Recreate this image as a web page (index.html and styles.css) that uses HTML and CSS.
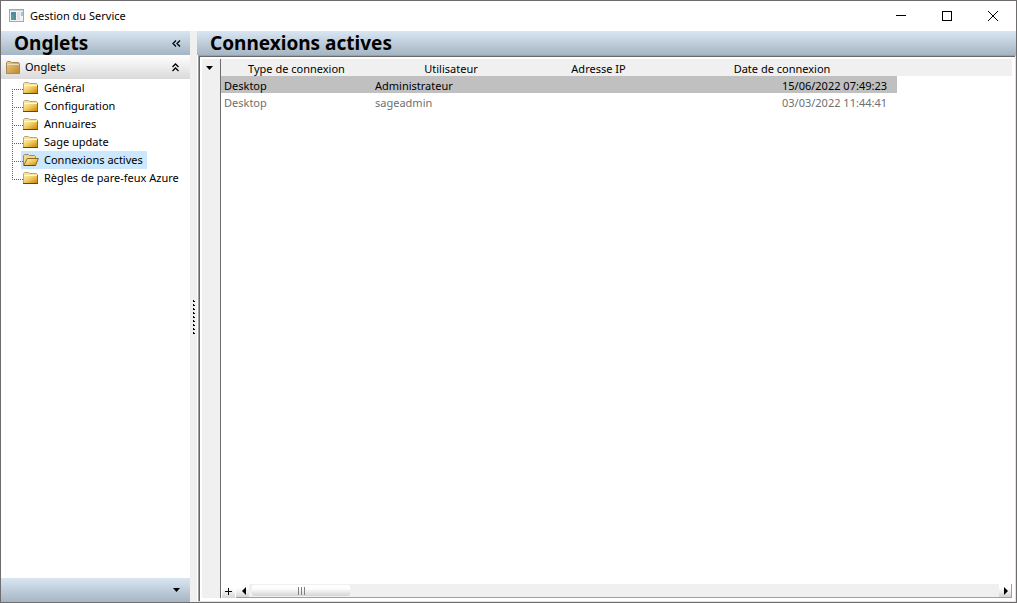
FILE: index.html
```html
<!DOCTYPE html>
<html lang="fr">

<head>
  <meta charset="UTF-8">
  <meta name="viewport" content="width=device-width, initial-scale=1.0">
  <title>Gestion du Service</title>
  <link rel="stylesheet" href="styles.css">
</head>

<body>
  <!-- Shared icons -->
  <svg class="icon-defs" width="0" height="0" aria-hidden="true">
    <defs>
      <linearGradient id="gold" x1="0" y1="0" x2="1" y2="1">
        <stop offset="0" stop-color="#fff3bd" />
        <stop offset="0.5" stop-color="#f0c95e" />
        <stop offset="1" stop-color="#c98500" />
      </linearGradient>
      <linearGradient id="brown" x1="0" y1="0" x2="1" y2="1">
        <stop offset="0" stop-color="#ecce86" />
        <stop offset="1" stop-color="#bd8630" />
      </linearGradient>
      <symbol id="folder" viewBox="0 0 16 12">
        <path d="M.5 11V1.500L1.500.5H5.500L6.500 1.500H13.500L14.500 2.500V11.500H.5Z" fill="#f6e3a0" stroke="#b5a67c" />
        <path d="M1 3H14V11H1Z" fill="url(#gold)" />
        <path d="M1 3.500H14" stroke="#fff8d8" />
        <path d="M0 11.500H15" stroke="#5e4a20" />
        <path d="M14.500 3V11" stroke="#8a6a28" />
      </symbol>
      <symbol id="folder-open" viewBox="0 0 16 12">
        <path d="M.5 11V1.500L1.500.5H5.500L6.500 1.500H11.500L12.500 2.500V5" fill="#f3d88b" stroke="#a08a5a" />
        <path d="M.7 11.500L4.300 4.500H15.400L12.500 11.500Z" fill="url(#gold)" stroke="#8a6a28" />
        <path d="M1 11.500H12.500" stroke="#5e4a20" />
      </symbol>
    </defs>
  </svg>

  <div class="window">
    <header class="titlebar">
      <svg class="app-icon" width="15" height="13" viewBox="0 0 15 13" aria-hidden="true">
        <rect x=".5" y=".5" width="14" height="12" fill="#f2f3f5" stroke="#a4a8ac" />
        <path d="M1 1.500H14" stroke="#cdd1d5" />
        <path d="M2 3h5v8h-5z" fill="#4f8aa0" />
        <path d="M2 6h3v5h-3z" fill="#4fa283" />
        <path d="M8 3h3v8h-3z" fill="#dfe2e8" />
        <path d="M12 3h2v4h-2z" fill="#a9c0c4" />
      </svg>
      <span class="titlebar-text">Gestion du Service</span>
      <div class="window-buttons">
        <button type="button" aria-label="Réduire">
          <svg width="10" height="10" viewBox="0 0 10 10"><path d="M0 4.500H10" stroke="#000" /></svg>
        </button>
        <button type="button" aria-label="Agrandir">
          <svg width="10" height="10" viewBox="0 0 10 10"><rect x=".5" y=".5" width="9" height="9" fill="none" stroke="#000" /></svg>
        </button>
        <button type="button" aria-label="Fermer">
          <svg width="10" height="10" viewBox="0 0 10 10"><path d="M0 0L10 10M10 0L0 10" stroke="#000" /></svg>
        </button>
      </div>
    </header>

    <div class="content">
      <aside class="sidebar">
        <div class="bar">
          <h2>Onglets</h2>
          <button type="button" aria-label="Replier">
            <svg width="9" height="7" viewBox="0 0 9 7"><path d="M4 .5L1 3.500L4 6.500M8 .5L5 3.500L8 6.500" fill="none" stroke="#000" stroke-width="1.300" /></svg>
          </button>
        </div>

        <div class="group">
          <svg width="14" height="13" viewBox="0 0 14 13" aria-hidden="true">
            <path d="M.5 12.500V1.500L1.500.5H4.500L5.500 1.500H12.500L13.500 2.500V12.500Z" fill="url(#brown)" stroke="#a48a5c" />
            <path d="M1 3.500H13" stroke="#f0dcae" />
          </svg>
          <span>Onglets</span>
          <button type="button" aria-label="Réduire le groupe">
            <svg width="7" height="9" viewBox="0 0 7 9"><path d="M.5 4L3.500 1L6.500 4M.5 8L3.500 5L6.500 8" fill="none" stroke="#000" stroke-width="1.300" /></svg>
          </button>
        </div>

        <ul class="tree">
          <li><a href="#"><svg class="folder"><use href="#folder" /></svg><span>Général</span></a></li>
          <li><a href="#"><svg class="folder"><use href="#folder" /></svg><span>Configuration</span></a></li>
          <li><a href="#"><svg class="folder"><use href="#folder" /></svg><span>Annuaires</span></a></li>
          <li><a href="#"><svg class="folder"><use href="#folder" /></svg><span>Sage update</span></a></li>
          <li><a href="#" class="active"><svg class="folder"><use href="#folder-open" /></svg><span>Connexions actives</span></a></li>
          <li><a href="#"><svg class="folder"><use href="#folder" /></svg><span>Règles de pare-feux Azure</span></a></li>
        </ul>

        <div class="bar bar-bottom">
          <button type="button" aria-label="Options"><svg width="7" height="4" viewBox="0 0 7 4"><path d="M0 0H7L3.500 4Z" /></svg></button>
        </div>
      </aside>

      <div class="splitter"><span class="grip"></span></div>

      <main class="main">
        <div class="bar">
          <h1>Connexions actives</h1>
        </div>

        <div class="panel">
          <div class="gutter">
            <button type="button" aria-label="Menu de la liste"><svg width="7" height="4" viewBox="0 0 7 4"><path d="M0 0H7L3.500 4Z" /></svg></button>
          </div>
          <div class="list">
            <div class="list-body">
              <table>
                <colgroup>
                  <col class="col-type">
                  <col class="col-user">
                  <col class="col-ip">
                  <col class="col-date">
                </colgroup>
                <thead>
                  <tr>
                    <th>Type de connexion</th>
                    <th>Utilisateur</th>
                    <th>Adresse IP</th>
                    <th>Date de connexion</th>
                  </tr>
                </thead>
                <tbody>
                  <tr class="selected">
                    <td>Desktop</td>
                    <td>Administrateur</td>
                    <td></td>
                    <td class="date">15/06/2022 07:49:23</td>
                  </tr>
                  <tr>
                    <td>Desktop</td>
                    <td>sageadmin</td>
                    <td></td>
                    <td class="date">03/03/2022 11:44:41</td>
                  </tr>
                </tbody>
              </table>
            </div>

            <div class="scroll-row">
              <button type="button" aria-label="Ajouter"><svg width="7" height="7" viewBox="0 0 7 7"><path d="M3.500 0V7M0 3.500H7" stroke="#000" /></svg></button>
              <div class="scrollbar">
                <button type="button" class="scroll-left" aria-label="Défiler à gauche"><svg width="5" height="8" viewBox="0 0 5 8"><path d="M4 0V8L0 4Z" /></svg></button>
                <div class="thumb"><i></i><i></i><i></i></div>
                <button type="button" class="scroll-right" aria-label="Défiler à droite"><svg width="5" height="8" viewBox="0 0 5 8"><path d="M1 0V8L5 4Z" /></svg></button>
              </div>
            </div>
          </div>
        </div>
      </main>
    </div>
  </div>
</body>

</html>
```
FILE: styles.css
```css
* {
  box-sizing: border-box;
}

body {
  margin: 0;
  font-family: "Noto Sans", "Open Sans", sans-serif;
  font-size: 11px;
  line-height: 18px;
  color: #000;
}

button {
  display: flex;
  align-items: center;
  justify-content: center;
  padding: 0;
  border: none;
  background: none;
}

svg {
  display: block;
  flex: none;
}

.icon-defs {
  position: absolute;
}

.window {
  display: flex;
  flex-direction: column;
  height: 100vh;
  border: 1px solid #6e6c6c;
  background: #fff;
}

/* Title bar */
.titlebar {
  display: flex;
  align-items: center;
  height: 30px;
  padding-left: 8px;
}

.app-icon {
  margin-bottom: 1px;
}

.titlebar-text {
  margin-left: 6px;
}

.window-buttons {
  display: flex;
  margin-left: auto;
}

.window-buttons button {
  width: 46px;
  height: 28px;
}

.content {
  display: flex;
  flex: 1;
  min-height: 0;
}

.bar {
  display: flex;
  align-items: center;
  justify-content: space-between;
  flex: none;
  height: 24px;
  padding: 0 9px 0 13px;
  background: linear-gradient(#d9e6f2, #a6b5c3);
}

.bar h1,
.bar h2 {
  margin: 0;
  font-size: 19px;
  line-height: 24px;
  font-weight: bold;
}

/* Sidebar */
.sidebar {
  display: flex;
  flex-direction: column;
  flex: none;
  width: 189px;
}

.group {
  display: flex;
  align-items: center;
  height: 24px;
  padding: 0 11px 0 5px;
  background: linear-gradient(#fff, #dadada);
}

.group span {
  margin-left: 5px;
}

.group button {
  margin-left: auto;
}

.tree {
  flex: 1;
  margin: 0;
  padding: 0 0 0 11px;
  list-style: none;
}

.tree li {
  position: relative;
  display: flex;
  height: 18px;
  padding-left: 9px;
}

/* dotted connectors */
.tree li::before {
  content: "";
  position: absolute;
  left: 0;
  top: 0;
  width: 1px;
  height: 18px;
  background: repeating-linear-gradient(#606060 0 1px, transparent 1px 2px);
}

.tree li::after {
  content: "";
  position: absolute;
  left: 0;
  top: 10px;
  width: 11px;
  height: 1px;
  background: repeating-linear-gradient(90deg, #606060 0 1px, transparent 1px 2px);
}

.tree li:first-child::before {
  top: 10px;
  height: 8px;
}

.tree li:last-child::before {
  height: 10px;
}

.tree a {
  display: flex;
  align-items: center;
  padding: 0 4px 0 2px;
  color: #000;
  text-decoration: none;
  white-space: nowrap;
}

.tree a.active {
  background: #cce8ff;
}

.tree span {
  margin-left: 5px;
}

.folder {
  width: 16px;
  height: 12px;
}

.bar-bottom {
  justify-content: flex-end;
  padding-right: 10px;
}

/* Splitter */
.splitter {
  display: flex;
  align-items: center;
  flex: none;
  width: 7px;
  padding-left: 3px;
  background: #f0f0f0;
}

.grip {
  width: 2px;
  height: 34px;
  background:
    repeating-linear-gradient(#000 0 2px, transparent 2px 4px) left / 1px 100% no-repeat,
    repeating-linear-gradient(transparent 0 1px, #000 1px 2px, transparent 2px 4px);
}

/* Main panel */
.main {
  display: flex;
  flex-direction: column;
  flex: 1;
  min-width: 0;
}

.panel {
  display: flex;
  flex: 1;
  min-height: 0;
  margin-left: 1px;
  padding: 3px;
  border: 1px solid #e3e3e3;
  border-top-color: #a0a0a0;
  border-left-color: #a0a0a0;
  box-shadow: inset 1px 1px #696969;
}

.gutter {
  flex: none;
  width: 19px;
  border-right: 1px solid #6e6c6c;
  background: #f0f0f0;
}

.gutter button {
  width: 15px;
  height: 17px;
}

.list {
  display: flex;
  flex-direction: column;
  flex: 1;
  min-width: 0;
}

.list-body {
  flex: 1;
  background: linear-gradient(#f0f0f0, #f0f0f0) top / 100% 17px no-repeat;
}

table {
  width: 676px;
  table-layout: fixed;
  border-collapse: collapse;
}

.col-type {
  width: 151px;
}

.col-user {
  width: 158px;
}

.col-ip {
  width: 137px;
}

th,
td {
  height: 17px;
  padding: 2px 3px 0;
  line-height: 15px;
  font-weight: normal;
  text-align: center;
  white-space: nowrap;
}

td {
  text-align: left;
  color: #707070;
}

td.date {
  padding-right: 10px;
  text-align: right;
}

.selected td {
  background: #c0c0c0;
  color: #000;
}

/* Horizontal scrollbar */
.scroll-row {
  display: flex;
  height: 14px;
  padding-left: 1px;
}

.scroll-row button {
  flex: none;
  width: 13px;
  background: linear-gradient(#fff 30%, #d4d4d4);
}

.scrollbar {
  display: flex;
  flex: 1;
  margin-left: 1px;
  border-bottom: 1px solid #a0a0a0;
  background: #f0f0f0;
}

.scroll-row .scroll-left {
  padding-left: 4px;
}

.thumb {
  display: flex;
  align-items: center;
  justify-content: center;
  gap: 2px;
  width: 98px;
  height: 11px;
  margin: 1px 0 0 3px;
  border-radius: 2px;
  background: linear-gradient(#fff 30%, #d4d4d4);
}

.thumb i {
  width: 1px;
  height: 8px;
  background: #808080;
}

.scroll-row .scroll-right {
  margin-left: auto;
  border-right: 1px solid #a0a0a0;
}
```
